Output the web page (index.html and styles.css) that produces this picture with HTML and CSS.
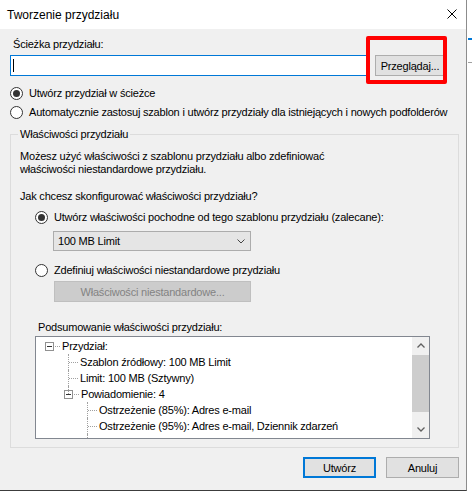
FILE: index.html
```html
<!DOCTYPE html>
<html lang="pl">
<head>
  <meta charset="UTF-8">
  <meta name="viewport" content="width=device-width, initial-scale=1.0">
  <title>Tworzenie przydziału</title>
  <link rel="stylesheet" href="styles.css">
</head>
<body>

  <div class="screen">
    <div class="window">
      <div class="titlebar">
        <span class="title">Tworzenie przydziału</span>
        <svg class="close" width="10" height="10" viewBox="0 0 10 10">
          <path d="M0.5 0.5 L9.5 9.5 M9.5 0.5 L0.5 9.5" stroke="#000" stroke-width="1" fill="none"/>
        </svg>
      </div>

      <div class="content">
        <div class="label">Ścieżka przydziału:</div>
        <div class="path-row">
          <div class="path-input"><span class="caret"></span></div>
          <button class="btn browse">Przeglądaj...</button>
          <div class="highlight"></div>
        </div>

        <div class="radio-row first"><span class="radio checked"></span>Utwórz przydział w ścieżce</div>
        <div class="radio-row"><span class="radio"></span>Automatycznie zastosuj szablon i utwórz przydziały dla istniejących i nowych podfolderów</div>

        <fieldset class="group">
          <legend>Właściwości przydziału</legend>
          <p class="intro">Możesz użyć właściwości z szablonu przydziału albo zdefiniować<br>właściwości niestandardowe przydziału.</p>
          <p class="question">Jak chcesz skonfigurować właściwości przydziału?</p>

          <div class="radio-row sub derived"><span class="radio checked"></span>Utwórz właściwości pochodne od tego szablonu przydziału (zalecane):</div>
          <div class="combo">
            <span>100 MB Limit</span>
            <svg width="8" height="5" viewBox="0 0 8 5"><path d="M0.5 0.5 L4 4 L7.5 0.5" stroke="#444" fill="none"/></svg>
          </div>

          <div class="radio-row sub custom"><span class="radio"></span>Zdefiniuj właściwości niestandardowe przydziału</div>
          <button class="btn disabled">Właściwości niestandardowe...</button>

          <div class="summary-label">Podsumowanie właściwości przydziału:</div>
          <div class="tree">
            <div class="tree-list">
              <div class="node root"><span class="expander"></span><span class="stub"></span>Przydział:</div>
              <div class="node l1">Szablon źródłowy: 100 MB Limit</div>
              <div class="node l1">Limit: 100 MB (Sztywny)</div>
              <div class="node l1 parent"><span class="expander"></span><span class="stub"></span>Powiadomienie: 4</div>
              <div class="node l2">Ostrzeżenie (85%): Adres e-mail</div>
              <div class="node l2">Ostrzeżenie (95%): Adres e-mail, Dziennik zdarzeń</div>
              <div class="node l2 more"></div>
            </div>
            <div class="scrollbar">
              <div class="arrow">
                <svg width="8" height="5" viewBox="0 0 8 5"><path d="M0.5 4.5 L4 1 L7.5 4.5" stroke="#606060" stroke-width="1.3" fill="none"/></svg>
              </div>
              <div class="track"><div class="thumb"></div></div>
              <div class="arrow">
                <svg width="8" height="5" viewBox="0 0 8 5"><path d="M0.5 0.5 L4 4 L7.5 0.5" stroke="#606060" stroke-width="1.3" fill="none"/></svg>
              </div>
            </div>
          </div>
        </fieldset>

        <div class="actions">
          <button class="btn default">Utwórz</button>
          <button class="btn">Anuluj</button>
        </div>
      </div>
    </div>

    <div class="backdrop">
      <div class="bd-blue"></div>
      <div class="bd-gray"></div>
    </div>
  </div>

</body>
</html>
```

FILE: styles.css
```css
* {
  box-sizing: border-box;
}
body {
  margin: 0;
  background: #fff;
  font-family: "Liberation Sans", Arial, sans-serif;
  font-size: 11px;
  line-height: 13px;
  letter-spacing: -0.2px;
  color: #000;
  overflow: hidden;
}
.screen {
  display: flex;
  width: 472px;
  height: 491px;
}
.window {
  width: 467px;
  height: 491px;
  border-right: 1px solid #8c8c8c;
  border-bottom: 1px solid #3c3c3c;
  display: flex;
  flex-direction: column;
}
.titlebar {
  height: 29px;
  background: #fff;
  display: flex;
  align-items: center;
  justify-content: space-between;
  padding: 0 9px 0 7px;
}
.title {
  font-size: 12px;
  letter-spacing: 0;
  padding-top: 1px;
}
.close {
  margin-top: -1px;
}
.content {
  flex: 1;
  background: #f0f0f0;
  padding: 9px 7px 0 10px;
}
.label {
  height: 13px;
  padding-left: 3px;
}
.path-row {
  position: relative;
  display: flex;
  margin-top: 4px;
  height: 21px;
}
.path-input {
  flex: 1;
  background: #fff;
  border: 1px solid #0078d7;
  padding: 3px 0 0 2px;
}
.caret {
  display: block;
  width: 1px;
  height: 13px;
  background: #000;
}
.btn {
  font-family: inherit;
  font-size: 11px;
  letter-spacing: -0.2px;
  color: #000;
  height: 21px;
  background: #e1e1e1;
  border: 1px solid #adadad;
  padding: 0;
  border-radius: 0;
}
.browse {
  width: 70px;
  margin: 0 14px 0 7px;
}
.highlight {
  position: absolute;
  left: 356px;
  top: -19px;
  width: 81px;
  height: 48px;
  border: 4px solid #ff0000;
  border-radius: 2px;
}
.radio-row {
  display: flex;
  align-items: center;
  height: 19px;
  white-space: nowrap;
}
.radio-row.first {
  margin-top: 8px;
}
.radio {
  width: 13px;
  height: 13px;
  border: 1px solid #333;
  border-radius: 50%;
  background: #fff;
  margin-right: 6px;
  flex-shrink: 0;
  display: flex;
  align-items: center;
  justify-content: center;
}
.radio.checked::after {
  content: "";
  width: 7px;
  height: 7px;
  border-radius: 50%;
  background: #333;
}
.group {
  margin: 6px 0 0;
  padding: 0 0 8px;
  border: 1px solid #dcdcdc;
  min-width: 0;
}
.group legend {
  margin-left: 7px;
  padding: 0 2px;
  line-height: 13px;
}
.intro {
  margin: 9px 0 0 9px;
}
.question {
  margin: 14px 0 0 9px;
}
.radio-row.sub {
  margin-left: 24px;
}
.derived {
  margin-top: 5px;
}
.combo {
  margin: 4px 0 0 42px;
  width: 198px;
  height: 20px;
  background: #e5e5e5;
  border: 1px solid #acacac;
  display: flex;
  align-items: center;
  justify-content: space-between;
  padding: 0 5px 0 4px;
}
.custom {
  margin-top: 10px;
}
.disabled {
  display: block;
  margin: 1px 0 0 43px;
  width: 197px;
  background: #cccccc;
  border-color: #bfbfbf;
  color: #838383;
}
.summary-label {
  margin: 19px 0 0 27px;
}
.tree {
  display: flex;
  margin: 2px 0 0 24px;
  width: 395px;
  height: 103px;
  background: #fff;
  border: 1px solid #828790;
  overflow: hidden;
}
.tree-list {
  flex: 1;
  padding-top: 1px;
  white-space: nowrap;
  overflow: hidden;
}
.node {
  position: relative;
  display: flex;
  align-items: center;
  height: 16px;
}
.node.root {
  padding-left: 9px;
}
.expander {
  width: 9px;
  height: 9px;
  border: 1px solid #919191;
  background: #fff;
  display: flex;
  align-items: center;
  justify-content: center;
  flex-shrink: 0;
}
.expander::after {
  content: "";
  width: 5px;
  height: 1px;
  background: #333;
}
.stub {
  width: 5px;
  border-top: 1px dotted #a0a0a0;
  margin: 0 2px 0 1px;
}
.node.l1 {
  padding-left: 44px;
}
.node.l2 {
  padding-left: 63px;
}
.node.l1::before,
.node.l2::before {
  content: "";
  position: absolute;
  top: 0;
  height: 16px;
  border-left: 1px dotted #a0a0a0;
}
.node.l1::before {
  left: 32px;
}
.node.l2::before {
  left: 51px;
}
.node.l1::after,
.node.l2::after {
  content: "";
  position: absolute;
  top: 8px;
  width: 9px;
  border-top: 1px dotted #a0a0a0;
}
.node.l1::after {
  left: 33px;
}
.node.l2::after {
  left: 52px;
}
.node.l1.parent {
  padding-left: 28px;
}
.node.l1.parent::before {
  height: 8px;
}
.node.l1.parent::after,
.node.l2.more::after {
  display: none;
}
.scrollbar {
  width: 17px;
  background: #f0f0f0;
  display: flex;
  flex-direction: column;
}
.arrow {
  height: 17px;
  display: flex;
  align-items: center;
  justify-content: center;
}
.track {
  flex: 1;
  padding-top: 1px;
}
.thumb {
  height: 57px;
  background: #cdcdcd;
}
.actions {
  display: flex;
  justify-content: flex-end;
  gap: 10px;
  margin-top: 9px;
}
.actions .btn {
  width: 73px;
}
.btn.default {
  border: 2px solid #0078d7;
}
.backdrop {
  flex: 1;
  padding-left: 1px;
}
.bd-blue {
  margin-top: 38px;
  height: 2px;
  background: #0078d7;
}
.bd-gray {
  margin-top: 22px;
  height: 1px;
  background: #a0a0a0;
}
```
